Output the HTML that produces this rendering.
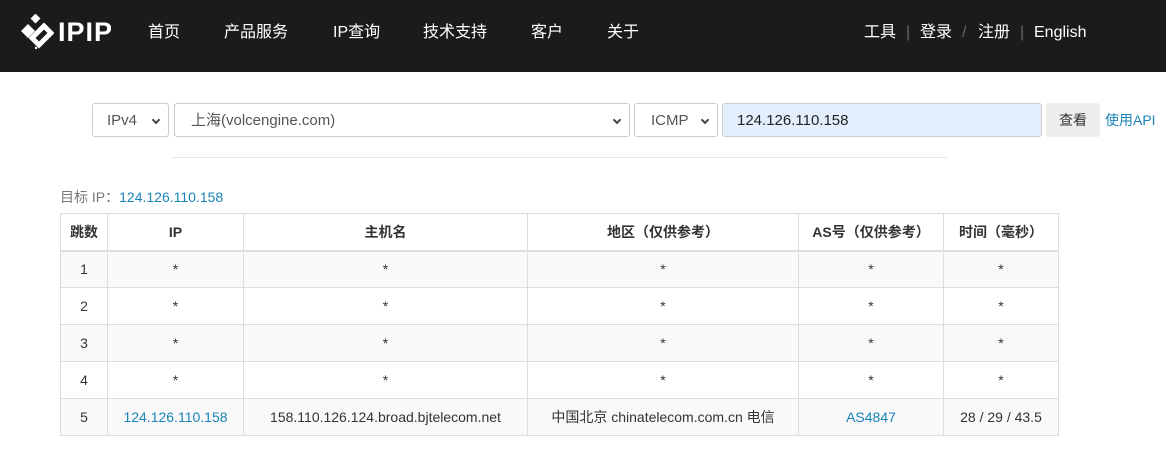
<!DOCTYPE html>
<html><head><meta charset="utf-8"><style>
*{margin:0;padding:0;box-sizing:border-box}
body{width:1166px;height:454px;background:#fff;font-family:"Liberation Sans","Noto Sans CJK SC",sans-serif;color:#333;position:relative;overflow:hidden}
.nav{position:absolute;left:0;top:0;width:1166px;height:72px;background:#1b1b1b}
.nav span{position:absolute;top:23px;color:#fff;font-size:16px;line-height:20px}
.sep{color:#666!important}
.box{position:absolute;top:103px;height:34px;border:1px solid #ccc;border-radius:3px;font-size:15px;line-height:34px;padding-left:14px;color:#555;background:#fff}
.chev{position:absolute;right:9px;top:13px;width:6px;height:6px;border-right:2px solid #444;border-bottom:2px solid #444;transform:rotate(45deg)}
table{position:absolute;left:60px;top:213px;border-collapse:collapse;font-size:14px;color:#333}
td,th{border:1px solid #ddd;text-align:center;height:37px;padding:0}
th{font-weight:bold;font-size:14px;color:#333;border-bottom:2px solid #ddd}
tr.g td{background:#f9f9f9}
a{color:#1a83b9;text-decoration:none}
</style></head><body>
<div class="nav">
<svg style="position:absolute;left:18px;top:14px" width="36" height="36" viewBox="0 0 36 36"><g fill="#fff"><rect x="14" y="1" width="7" height="7" transform="rotate(45 17.5 4.5)"/><path d="M3 17 L10 10 L17 17 L10 24Z"/><path d="M14 24 L26 12 L33 19 L21 31Z" fill="none" stroke="#fff" stroke-width="5"/></g><circle cx="18" cy="34" r="1.2" fill="#fff"/></svg>
<span style="left:58px;top:17px;font-size:27px;font-weight:bold;letter-spacing:1px;line-height:30px">IPIP</span>
<span style="left:148px">首页</span><span style="left:224px">产品服务</span><span style="left:333px">IP查询</span><span style="left:423px">技术支持</span><span style="left:531px">客户</span><span style="left:607px">关于</span>
<span style="left:864px">工具</span><span class="sep" style="left:906px">|</span><span style="left:920px">登录</span><span class="sep" style="left:962px">/</span><span style="left:978px">注册</span><span class="sep" style="left:1020px">|</span><span style="left:1034px">English</span>
</div>
<div class="box" style="left:92px;width:77px">IPv4<span class="chev"></span></div>
<div class="box" style="left:174px;width:456px;padding-left:16px">上海(volcengine.com)<span class="chev"></span></div>
<div class="box" style="left:634px;width:84px;padding-left:16px">ICMP<span class="chev"></span></div>
<div class="box" style="left:722px;width:320px;background:#e3effc;color:#222">124.126.110.158</div>
<div class="box" style="left:1046px;width:54px;border:none;background:#eee;color:#333;padding-left:13px;font-size:14px">查看</div>
<div style="position:absolute;left:1105px;top:110px;font-size:14px;color:#1a83b9">使用API</div>
<div style="position:absolute;left:172px;top:157px;width:775px;height:1px;background:#e5e5e5"></div>
<div style="position:absolute;left:60px;top:187px;font-size:14px;color:#777">目标 IP：<a>124.126.110.158</a></div>
<table>
<tr><th style="width:47px">跳数</th><th style="width:136px">IP</th><th style="width:284px">主机名</th><th style="width:271px">地区（仅供参考）</th><th style="width:145px">AS号（仅供参考）</th><th style="width:115px">时间（毫秒）</th></tr>
<tr class="g"><td>1</td><td>*</td><td>*</td><td>*</td><td>*</td><td>*</td></tr>
<tr><td>2</td><td>*</td><td>*</td><td>*</td><td>*</td><td>*</td></tr>
<tr class="g"><td>3</td><td>*</td><td>*</td><td>*</td><td>*</td><td>*</td></tr>
<tr><td>4</td><td>*</td><td>*</td><td>*</td><td>*</td><td>*</td></tr>
<tr class="g"><td>5</td><td><a>124.126.110.158</a></td><td>158.110.126.124.broad.bjtelecom.net</td><td>中国北京 chinatelecom.com.cn 电信</td><td><a>AS4847</a></td><td>28 / 29 / 43.5</td></tr>
</table>
</body></html>
